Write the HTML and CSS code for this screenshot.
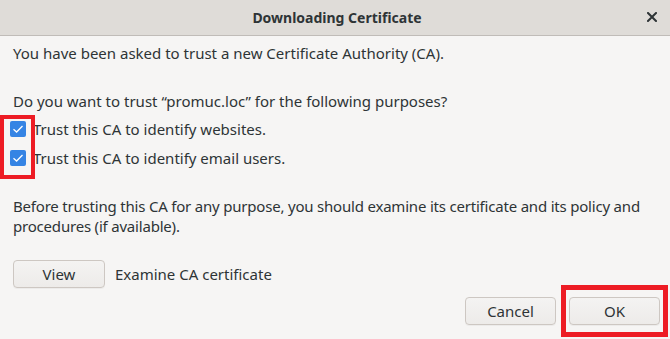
FILE: index.html
```html
<!DOCTYPE html>
<html lang="en">
<head>
    <meta charset="UTF-8">
    <title>Downloading Certificate</title>
    <link rel="stylesheet" href="styles.css">
</head>
<body>
    <div id="dialog">
        <div class="titlebar">
            <span class="title">Downloading Certificate</span>
            <span class="close-btn">
                <svg width="10" height="10" viewBox="0 0 10 10"><path d="M1 1 L9 9 M9 1 L1 9" stroke="#2e3436" stroke-width="2" stroke-linecap="square"/></svg>
            </span>
        </div>
        <div class="content">
            <p class="intro">You have been asked to trust a new Certificate Authority (CA).</p>
            <p class="question">Do you want to trust “promuc.loc” for the following purposes?</p>
            <div class="options">
                <label class="option"><span class="check"><svg width="16" height="16" viewBox="0 0 16 16"><path d="M3.5 8.2 L6.6 11 L12.5 5" fill="none" stroke="#fff" stroke-width="1.3"/></svg></span>Trust this CA to identify websites.</label>
                <label class="option"><span class="check"><svg width="16" height="16" viewBox="0 0 16 16"><path d="M3.5 8.2 L6.6 11 L12.5 5" fill="none" stroke="#fff" stroke-width="1.3"/></svg></span>Trust this CA to identify email users.</label>
                <div class="highlight checks-highlight"></div>
            </div>
            <p class="warning">Before trusting this CA for any purpose, you should examine its certificate and its policy and<br>procedures (if available).</p>
            <div class="view-row">
                <button class="btn view-btn">View</button>
                <span>Examine CA certificate</span>
            </div>
        </div>
        <div class="actions">
            <button class="btn">Cancel</button>
            <div class="ok-wrap">
                <button class="btn">OK</button>
                <div class="highlight ok-highlight"></div>
            </div>
        </div>
    </div>
</body>
</html>
```

FILE: styles.css
```css
body {
    margin: 0;
    font-family: "Noto Sans", sans-serif;
    font-size: 15px;
    color: #2e3436;
    background-color: #f6f5f4;
}
#dialog {
    width: 670px;
    height: 339px;
    display: flex;
    flex-direction: column;
}
.titlebar {
    height: 35px;
    background-color: #dfdcd8;
    border-bottom: 1px solid #c0bcb8;
    display: flex;
    align-items: center;
    justify-content: center;
    position: relative;
    flex-shrink: 0;
}
.title {
    font-weight: bold;
    font-size: 14px;
    color: #2e3436;
    margin-left: 4px;
}
.close-btn {
    position: absolute;
    right: 13px;
    top: 12px;
    display: flex;
}
.content {
    padding: 0 13px;
    flex: 1;
}
p {
    margin: 0;
    line-height: 20px;
}
.intro {
    margin-top: 7px;
}
.question {
    margin-top: 28px;
}
.options {
    position: relative;
    margin-left: -3px;
    margin-top: 3px;
}
.option {
    display: flex;
    align-items: center;
    height: 29px;
}
.check {
    width: 16px;
    height: 16px;
    background-color: #3584e4;
    border-radius: 2px;
    margin-right: 7px;
    display: flex;
}
.highlight {
    position: absolute;
    border: 4px solid #ed1c24;
    box-sizing: border-box;
}
.checks-highlight {
    left: -10px;
    top: 1px;
    width: 35px;
    height: 64px;
}
.warning {
    margin-top: 24px;
    margin-right: -13px;
    letter-spacing: -0.2px;
    white-space: nowrap;
}
.view-row {
    margin-top: 24px;
    display: flex;
    align-items: center;
    gap: 10px;
}
.btn {
    font-family: "Noto Sans", sans-serif;
    font-size: 15px;
    color: #2e3436;
    height: 28px;
    padding: 0;
    background: linear-gradient(#f4f3f2, #edebe9);
    border: 1px solid #cdc7c2;
    border-radius: 4px;
    box-shadow: 0 1px rgba(0, 0, 0, 0.04);
}
.view-btn {
    width: 92px;
}
.actions {
    display: flex;
    justify-content: flex-end;
    gap: 13px;
    padding: 0 10px 14px 0;
}
.actions .btn {
    width: 91px;
}
.ok-wrap {
    position: relative;
    display: flex;
}
.ok-highlight {
    left: -8px;
    top: -12px;
    right: -8px;
    bottom: -12px;
    border-width: 5px;
}
```
